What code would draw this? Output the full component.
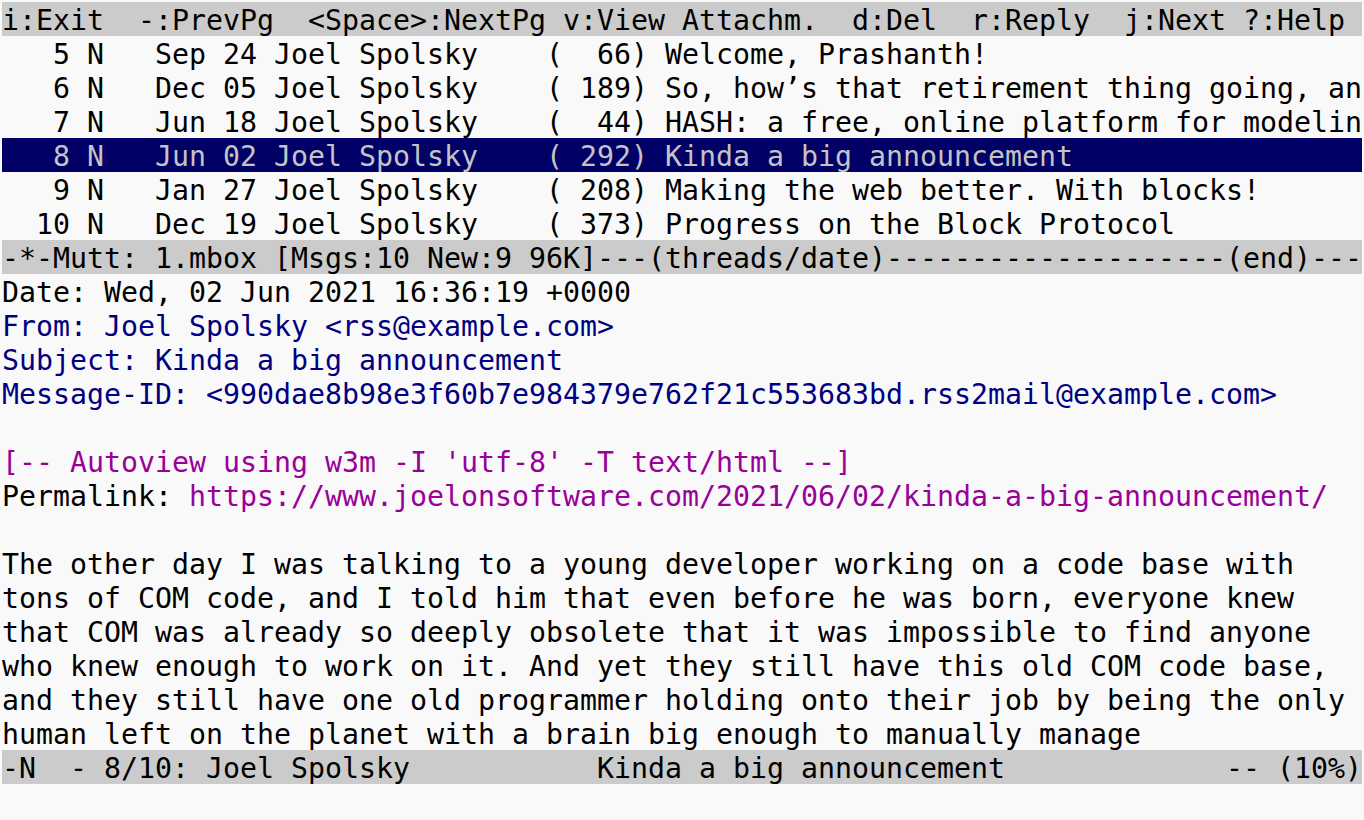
import React from 'react';

type Seg = { text: string; color?: string };
type Row = { segs: Seg[]; bar?: 'status' | 'select' };

const black = 'text-[#000000]';
const blue = 'text-[#000080]';
const magenta = 'text-[#990099]';

const rows: Row[] = [
  { bar: 'status', segs: [{ text: 'i:Exit  -:PrevPg  <Space>:NextPg v:View Attachm.  d:Del  r:Reply  j:Next ?:Help' }] },
  { segs: [{ text: '   5 N   Sep 24 Joel Spolsky    (  66) Welcome, Prashanth!' }] },
  { segs: [{ text: '   6 N   Dec 05 Joel Spolsky    ( 189) So, how’s that retirement thing going, an' }] },
  { segs: [{ text: '   7 N   Jun 18 Joel Spolsky    (  44) HASH: a free, online platform for modelin' }] },
  { bar: 'select', segs: [{ text: '   8 N   Jun 02 Joel Spolsky    ( 292) Kinda a big announcement' }] },
  { segs: [{ text: '   9 N   Jan 27 Joel Spolsky    ( 208) Making the web better. With blocks!' }] },
  { segs: [{ text: '  10 N   Dec 19 Joel Spolsky    ( 373) Progress on the Block Protocol' }] },
  { bar: 'status', segs: [{ text: '-*-Mutt: 1.mbox [Msgs:10 New:9 96K]---(threads/date)--------------------(end)---' }] },
  { segs: [{ text: 'Date: Wed, 02 Jun 2021 16:36:19 +0000' }] },
  { segs: [{ text: 'From: Joel Spolsky <rss@example.com>', color: blue }] },
  { segs: [{ text: 'Subject: Kinda a big announcement', color: blue }] },
  { segs: [{ text: 'Message-ID: <990dae8b98e3f60b7e984379e762f21c553683bd.rss2mail@example.com>', color: blue }] },
  { segs: [{ text: '' }] },
  { segs: [{ text: "[-- Autoview using w3m -I 'utf-8' -T text/html --]", color: magenta }] },
  {
    segs: [
      { text: 'Permalink: ' },
      { text: 'https://www.joelonsoftware.com/2021/06/02/kinda-a-big-announcement/', color: magenta },
    ],
  },
  { segs: [{ text: '' }] },
  { segs: [{ text: 'The other day I was talking to a young developer working on a code base with' }] },
  { segs: [{ text: 'tons of COM code, and I told him that even before he was born, everyone knew' }] },
  { segs: [{ text: 'that COM was already so deeply obsolete that it was impossible to find anyone' }] },
  { segs: [{ text: 'who knew enough to work on it. And yet they still have this old COM code base,' }] },
  { segs: [{ text: 'and they still have one old programmer holding onto their job by being the only' }] },
  { segs: [{ text: 'human left on the planet with a brain big enough to manually manage' }] },
  { bar: 'status', segs: [{ text: '-N  - 8/10: Joel Spolsky           Kinda a big announcement             -- (10%)' }] },
];

function TermRow({ row }: { row: Row }) {
  const bg =
    row.bar === 'status'
      ? 'bg-[#cbcbcb] text-[#000000]'
      : row.bar === 'select'
        ? 'bg-[#000066] text-[#c4c4c4]'
        : black;
  return (
    <div className={`h-[34px] pt-[4px] leading-[30px] whitespace-pre overflow-hidden ${bg}`}>
      {row.segs.map((s, i) => (
        <span key={i} className={s.color}>
          {s.text}
        </span>
      ))}
    </div>
  );
}

export default function App() {
  return (
    <div className="w-[1364px] h-[820px] bg-[#f9f9f9] p-[2px] overflow-hidden">
      <div
        className="w-[1360px] text-[28.24px]"
        style={{ fontFamily: '"DejaVu Sans Mono", "Liberation Mono", monospace' }}
      >
        {rows.map((r, i) => (
          <TermRow key={i} row={r} />
        ))}
      </div>
    </div>
  );
}
